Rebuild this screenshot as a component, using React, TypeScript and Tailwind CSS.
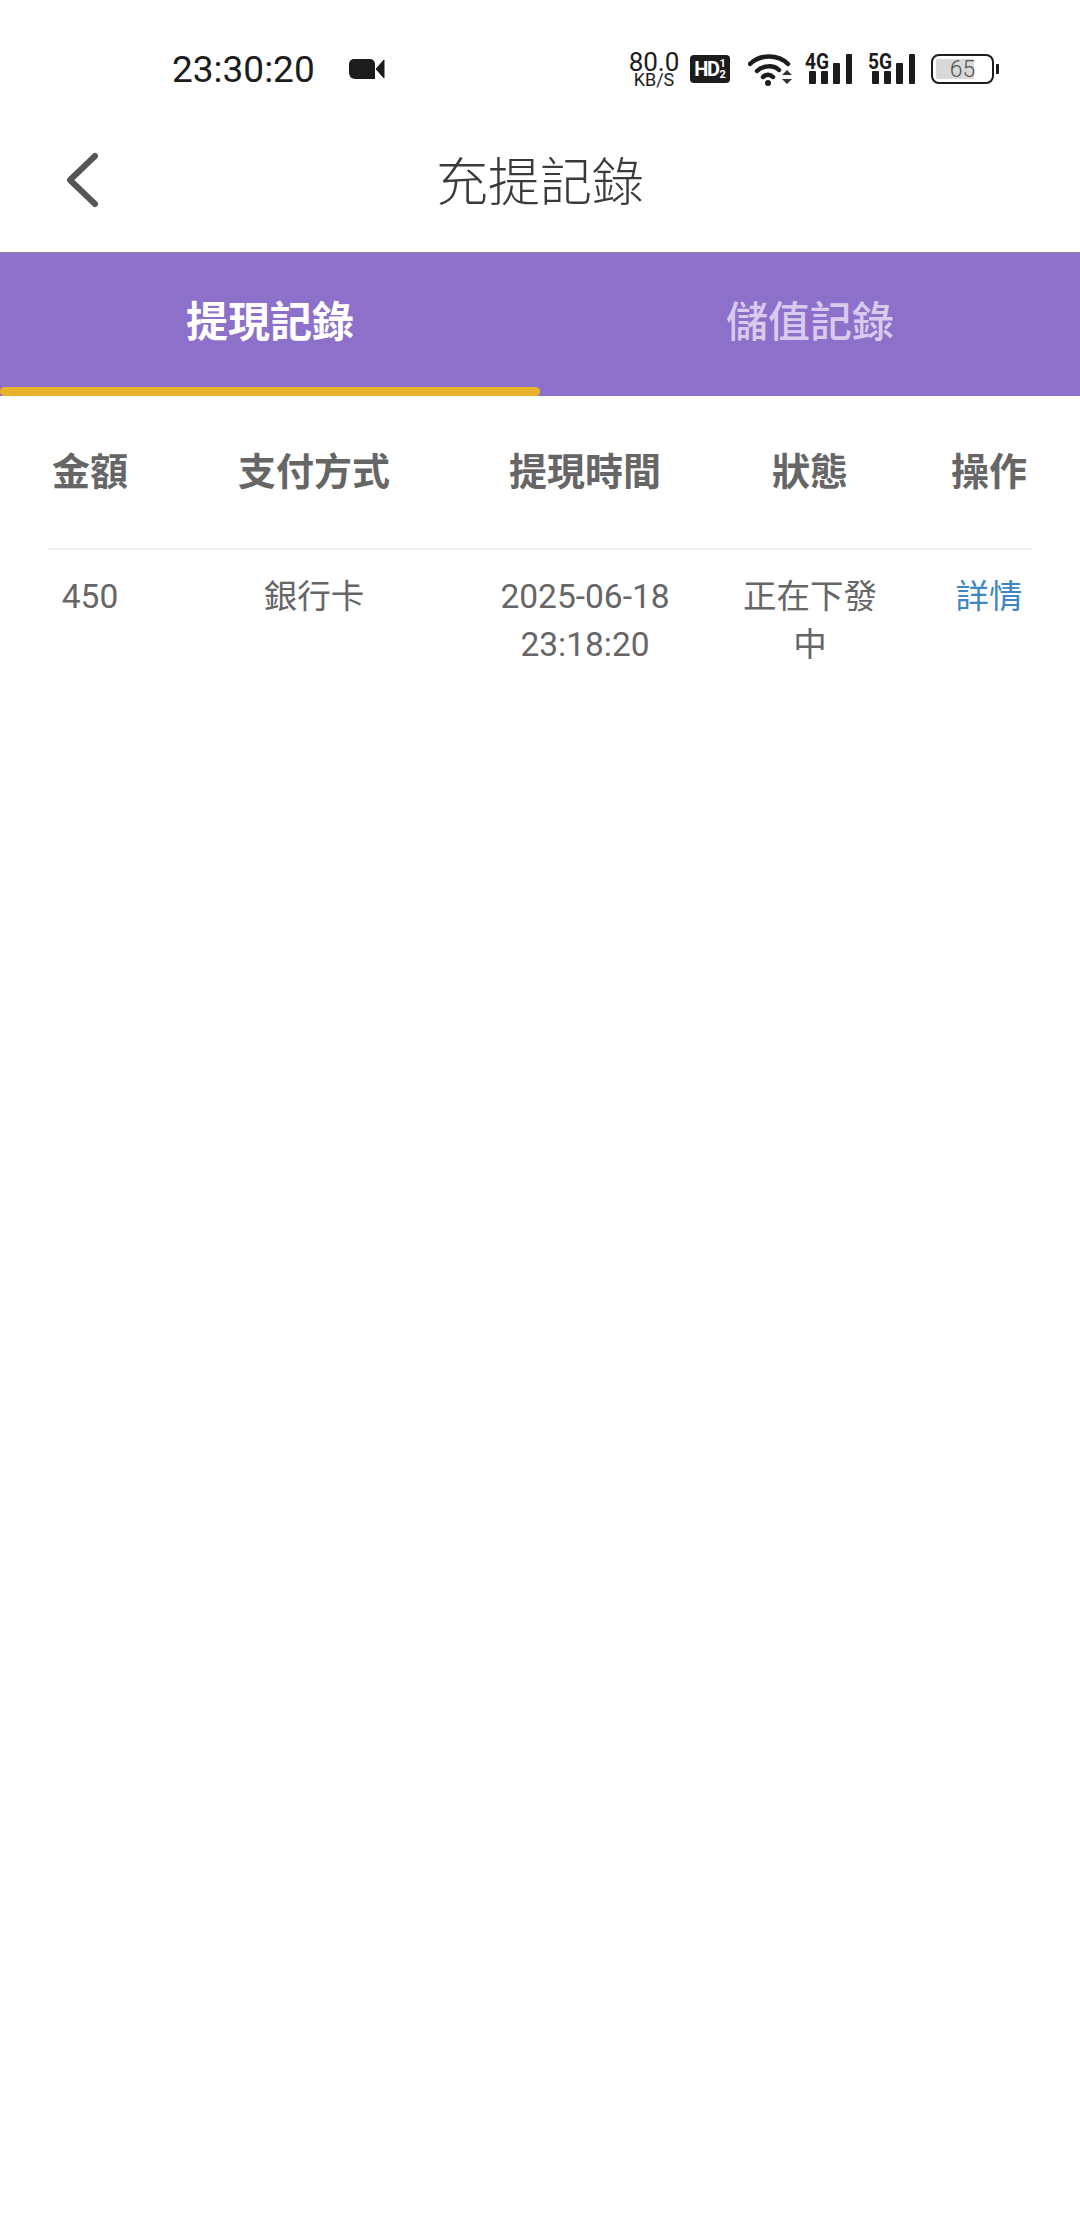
import * as React from "react";

function SignalIcon({ label }: { label: string }) {
  return (
    <svg className="overflow-visible" width="48" height="32" viewBox="0 0 48 32" fill="#1c1c1c">
      <text x="0" y="16" fontSize="22" fontWeight="700" fontFamily="Roboto, sans-serif" textLength="24" lengthAdjust="spacingAndGlyphs">
        {label}
      </text>
      <rect x="4" y="18" width="7" height="13" rx="1" />
      <rect x="16" y="18" width="7" height="13" rx="1" />
      <rect x="28" y="10" width="7" height="21" rx="1" />
      <rect x="41" y="1" width="6" height="30" rx="1" />
    </svg>
  );
}

function StatusBar() {
  return (
    <div className="h-[112px] pt-[26px] pl-[172px] pr-[81px] flex items-center justify-between text-[#1c1c1c]">
      <div className="flex items-center gap-[34px]">
        <span className="text-[37px] leading-none">23:30:20</span>
        <svg width="36" height="22" viewBox="0 0 36 22" fill="#1c1c1c">
          <path d="M5 1 H21 A5 5 0 0 1 26 6 V21 H6 A6 6 0 0 1 0 15 V6 A5 5 0 0 1 5 1 Z" />
          <path d="M27 11 L35 2 V20 Z" stroke="#1c1c1c" strokeLinejoin="round" />
        </svg>
      </div>
      <div className="flex items-center">
        <div className="w-[54px] flex flex-col items-center leading-none">
          <span className="text-[26px] leading-[20px]">80.0</span>
          <span className="text-[18px] leading-[15px]">KB/S</span>
        </div>
        <div className="ml-[9px] w-[40px] h-[28px] rounded-[4px] bg-[#1c1c1c] text-white flex items-center justify-center gap-[1px] font-bold">
          <span className="text-[20px] leading-none tracking-[-1.5px]">HD</span>
          <span className="flex flex-col text-[11px] leading-[11px]">
            <span>1</span>
            <span>2</span>
          </span>
        </div>
        <svg className="ml-[18px]" width="44" height="34" viewBox="0 0 44 34" fill="none">
          <path d="M2 12 C12 2 30 2 40 12" stroke="#1c1c1c" strokeWidth="4.5" strokeLinecap="round" />
          <path d="M9 19 C15 13 26 13 31 18" stroke="#1c1c1c" strokeWidth="4.5" strokeLinecap="round" />
          <path d="M15 25 C18 22 22 22 25 25" stroke="#1c1c1c" strokeWidth="4.5" strokeLinecap="round" />
          <circle cx="20" cy="31" r="3" fill="#1c1c1c" />
          <path d="M34 23 L39 18 L44 23 Z M34 27 L44 27 L39 32 Z" fill="#333" />
        </svg>
        <div className="ml-[13px] flex">
          <SignalIcon label="4G" />
        </div>
        <div className="ml-[15px] flex">
          <SignalIcon label="5G" />
        </div>
        <div className="ml-[15px] flex items-center gap-[2px]">
          <div className="relative w-[63px] h-[30px] rounded-[8px] border-2 border-[#1c1c1c] p-[3px]">
            <div className="w-[38px] h-full rounded-[2px] bg-[#d9d9d9]" />
            <span className="absolute inset-0 flex items-center justify-center text-[23px] font-light text-[#555] leading-none">65</span>
          </div>
          <div className="w-[3px] h-[10px] bg-[#1c1c1c] rounded-r-[1px]" />
        </div>
      </div>
    </div>
  );
}

const columns = "grid grid-cols-[84px_364px_178px_272px_86px]";

export default function App() {
  return (
    <div className="w-[1080px] h-[2237px] bg-white overflow-hidden font-['Roboto','Noto_Sans_CJK_TC',sans-serif]">
      <StatusBar />

      {/* Header */}
      <div className="h-[141px] relative flex items-center justify-center pt-[4px] border-b border-[#8a7f98]">
        <svg className="absolute left-[64px] top-[40px]" width="36" height="56" viewBox="0 0 36 56" fill="none">
          <path d="M31 4 L6 28 L31 52" stroke="#555555" strokeWidth="6" strokeLinecap="round" strokeLinejoin="round" />
        </svg>
        <h1 className="text-[52px] leading-none font-light text-[#3a3a3a]">充提記錄</h1>
      </div>

      {/* Tabs */}
      <div className="h-[143px] bg-[#8d70c9] flex">
        <div className="relative w-[540px] flex items-center justify-center pb-[4px]">
          <span className="text-[42px] leading-none font-bold text-white">提現記錄</span>
          <div className="absolute left-0 bottom-0 w-[540px] h-[9px] rounded-full bg-[#e8b32a]" />
        </div>
        <div className="w-[540px] flex items-center justify-center pb-[4px]">
          <span className="text-[42px] leading-none font-medium text-[#d9cbee]">儲值記錄</span>
        </div>
      </div>

      {/* Table */}
      <div className="mx-[48px]">
        <div className={`${columns} h-[154px] items-center text-center text-[38px] font-bold text-[#666666] border-b-2 border-[#f0f0f0]`}>
          <div>金額</div>
          <div>支付方式</div>
          <div>提現時間</div>
          <div>狀態</div>
          <div>操作</div>
        </div>
        <div className={`${columns} pt-[23px] text-center text-[33.5px] leading-[48px] text-[#666666]`}>
          <div>450</div>
          <div>銀行卡</div>
          <div>
            2025-06-18
            <br />
            23:18:20
          </div>
          <div className="w-[140px] mx-auto">正在下發中</div>
          <div className="text-[#3f86c4]">詳情</div>
        </div>
      </div>
    </div>
  );
}
